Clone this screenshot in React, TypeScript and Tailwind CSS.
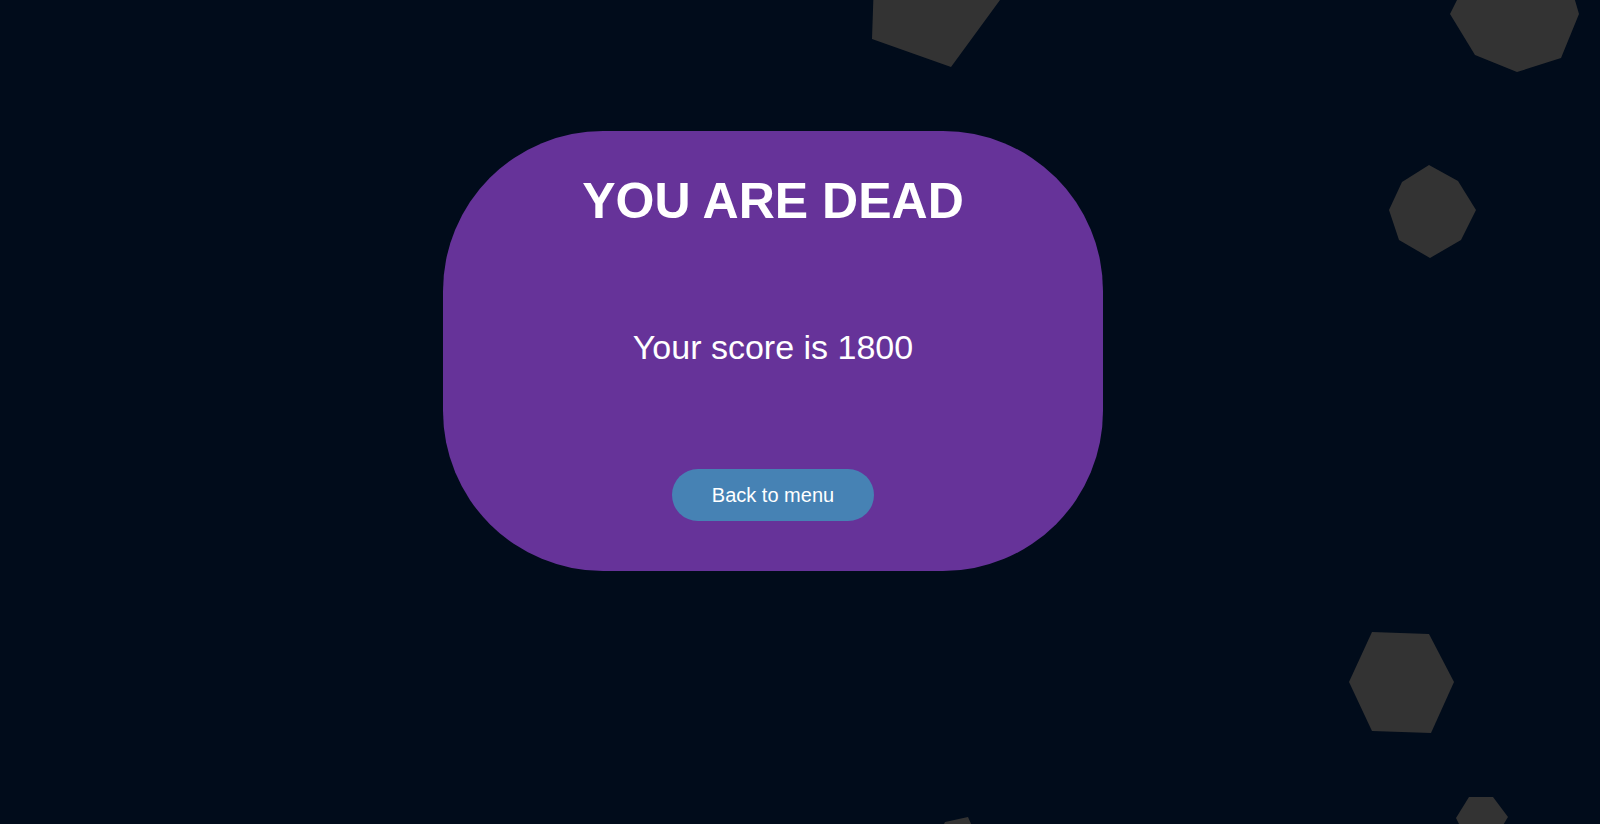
export default function App() {
  return (
    <main className="relative min-h-screen w-full overflow-hidden bg-[#010c1b] pt-[131px] font-['Liberation_Sans',Arial,sans-serif]">
      {/* Asteroids drifting in the background */}
      <svg
        className="pointer-events-none absolute inset-0 h-full w-full"
        aria-hidden="true"
      >
        <g fill="#333333">
          <polygon points="874,-20 872,39 951,67 1000,0 1015,-20" />
          <polygon points="1462,-10 1450,14 1475,55 1517,72 1561,58 1579,14 1572,-10" />
          <polygon points="1429,165 1458,181 1476,210 1461,240 1430,258 1399,240 1389,210 1402,182" />
          <polygon points="1372,632 1429,634 1454,682 1431,733 1372,731 1349,682" />
          <polygon points="943,826 945,822 968,817 972,826" />
          <polygon points="1469,797 1493,797 1508,817 1500,830 1462,830 1456,818" />
        </g>
      </svg>

      {/* Game over card */}
      <section className="relative ml-[443px] flex h-[440px] w-[660px] flex-col items-center rounded-[160px] bg-[#663399] text-white">
        <h1 className="mt-[42px] text-[50px] font-bold leading-[57px]">
          YOU ARE DEAD
        </h1>
        <p className="mt-[98px] text-[34px] leading-[39px]">
          Your score is 1800
        </p>
        <button className="mt-[102px] flex h-[52px] w-[202px] items-center justify-center rounded-full bg-[#4682b4] text-[20px] leading-[23px] text-white">
          Back to menu
        </button>
      </section>
    </main>
  );
}
